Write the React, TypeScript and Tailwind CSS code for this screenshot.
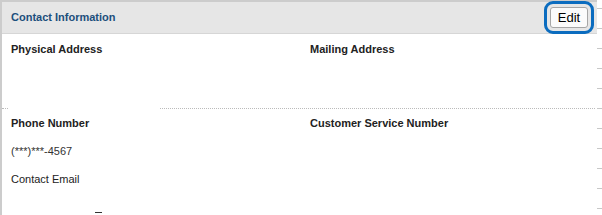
const font = "font-['Liberation_Sans',Arial,sans-serif]";

function Label({ children }: { children: React.ReactNode }) {
  return <div className="text-[11px] leading-[14px] font-bold text-[#222]">{children}</div>;
}

export default function App() {
  const dashes = Array.from({ length: 11 });

  return (
    <div className={`${font} flex w-[602px] h-[215px] overflow-hidden bg-white`}>
      <div className="w-[597px] shrink-0 border-l-2 border-t-2 border-[#cccccc]">
        <div className="flex h-[32px] items-center justify-between border-b border-[#d6d6d6] bg-[#e6e6e6] pl-[9px] pr-[9px]">
          <span className="text-[11px] font-bold text-[#1d4f7c]">Contact Information</span>
          <button className="h-[21px] w-[38px] rounded-[3px] border border-[#a6a6a6] bg-[#fbfbfb] text-[13px] leading-none text-black outline-3 outline-offset-[3px] outline-[#0b6cbf]">
            Edit
          </button>
        </div>

        <div className="grid h-[74px] grid-cols-[299px_1fr] pt-[8px]">
          <div className="pl-[9px]">
            <Label>Physical Address</Label>
          </div>
          <div className="pl-[9px]">
            <Label>Mailing Address</Label>
          </div>
        </div>

        <div className="flex">
          <div className="w-[6px] border-t border-dotted border-[#bbbbbb]" />
          <div className="w-[152px]" />
          <div className="flex-1 border-t border-dotted border-[#bbbbbb] mr-[2px]" />
        </div>

        <div className="grid grid-cols-[299px_1fr] pt-[7px]">
          <div className="pl-[9px]">
            <Label>Phone Number</Label>
            <div className="mt-[14px] text-[11px] leading-[14px] text-[#333]">(***)***-4567</div>
            <div className="mt-[14px] text-[11px] leading-[14px] text-[#222]">Contact Email</div>
            <div className="ml-[84px] mt-[26px] h-px w-[7px] bg-[#333]" />
          </div>
          <div className="pl-[9px]">
            <Label>Customer Service Number</Label>
          </div>
        </div>
      </div>

      <div className="flex w-[5px] flex-col gap-[19px] pt-[8px]">
        {dashes.map((_, i) => (
          <div key={i} className="h-px w-[5px] bg-[#c8c8c8]" />
        ))}
      </div>
    </div>
  );
}
